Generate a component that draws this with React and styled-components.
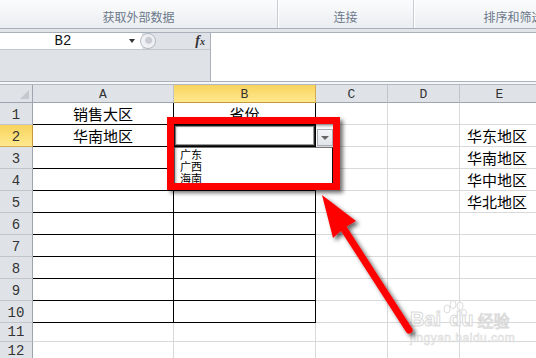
import React from 'react';
import styled, { createGlobalStyle } from 'styled-components';

const GlobalStyle = createGlobalStyle`
  html, body {
    margin: 0;
    padding: 0;
    background: #e3e6ea;
    overflow: hidden;
  }
`;

const COLS = ['A', 'B', 'C', 'D', 'E'];

const cells = {
  '1A': { text: '销售大区', align: 'center' },
  '1B': { text: '省份', align: 'center' },
  '2A': { text: '华南地区', align: 'center' },
  '2E': { text: '华东地区' },
  '3E': { text: '华南地区' },
  '4E': { text: '华中地区' },
  '5E': { text: '华北地区' },
};

const App = () => {
  const rows = Array.from({ length: 12 }, (_, i) => i + 1);

  return (
    <Page>
      <GlobalStyle />
      <Ribbon>
        <RibbonGroup $w={278}>获取外部数据</RibbonGroup>
        <RibbonGroup $w={136}>连接</RibbonGroup>
        <RibbonGroup $w={200}>排序和筛选</RibbonGroup>
      </Ribbon>
      <RibbonGap />
      <FormulaRow>
        <NamePanel>
          <NameRow>
            <NameField>
              <NameText>B2</NameText>
              <Caret />
            </NameField>
            <Controls>
              <CircleBtn />
              <Fx>
                f<small>x</small>
              </Fx>
            </Controls>
          </NameRow>
        </NamePanel>
        <FormulaInput />
      </FormulaRow>
      <Spacer />
      <Grid>
        <Corner />
        {COLS.map((c) => (
          <ColHead key={c} $active={c === 'B'}>
            {c}
          </ColHead>
        ))}
        {rows.map((r) => (
          <React.Fragment key={r}>
            <RowHead $active={r === 2}>{r}</RowHead>
            {COLS.map((c) => {
              const cell = cells[`${r}${c}`];
              return (
                <Cell
                  key={c}
                  $dark={r <= 10 && (c === 'A' || c === 'B')}
                  $align={cell && cell.align}
                  $selected={r === 2 && c === 'B'}
                >
                  {cell ? cell.text : ''}
                </Cell>
              );
            })}
          </React.Fragment>
        ))}

        <ListBox>
          <ListItem>广东</ListItem>
          <ListItem>广西</ListItem>
          <ListItem>海南</ListItem>
        </ListBox>
        <DropButton>
          <DropTri />
        </DropButton>
        <RedBox />
      </Grid>

      <Watermark>
        <MarkTop>
          <MarkWord>Bai</MarkWord>
          <svg width="26" height="30" viewBox="0 0 26 30">
            <g fill="rgba(255,255,255,0.6)" stroke="#dcdcdc" strokeWidth="1">
              <ellipse cx="6" cy="9" rx="3" ry="4" />
              <ellipse cx="12" cy="4.5" rx="3" ry="4" />
              <ellipse cx="19" cy="6" rx="3" ry="4" />
              <ellipse cx="23" cy="13" rx="2.5" ry="3.5" />
            </g>
          </svg>
          <MarkWord $offset>du</MarkWord>
          <MarkCn>经验</MarkCn>
        </MarkTop>
        <MarkUrl>jingyan.baidu.com</MarkUrl>
      </Watermark>

      <ArrowLayer width="536" height="358" viewBox="0 0 536 358">
        <defs>
          <filter id="arrowShadow" x="-20%" y="-20%" width="150%" height="150%">
            <feDropShadow dx="3" dy="3" stdDeviation="2" floodColor="#000" floodOpacity="0.6" />
          </filter>
        </defs>
        <g filter="url(#arrowShadow)" fill="#ff0000">
          <line x1="409" y1="330" x2="342" y2="226" stroke="#ff0000" strokeWidth="7" strokeLinecap="round" />
          <polygon points="322,195 356,221 344,228 333,238" />
        </g>
      </ArrowLayer>
    </Page>
  );
};

const Page = styled.div`
  position: relative;
  width: 536px;
  height: 358px;
  overflow: hidden;
  display: flex;
  flex-direction: column;
  background: #e3e6ea;
  font-family: 'Noto Sans CJK SC', 'Noto Sans', sans-serif;
`;

const Ribbon = styled.div`
  flex: none;
  height: 28px;
  display: flex;
  background: linear-gradient(#fbfcfd, #eaedf1);
  border-bottom: 1px solid #a9b0ba;
  overflow: hidden;
`;

const RibbonGroup = styled.div`
  flex: none;
  width: ${(p) => p.$w}px;
  box-sizing: border-box;
  display: flex;
  align-items: flex-end;
  justify-content: center;
  padding-bottom: 3px;
  border-right: 1px solid #c8cdd4;
  box-shadow: 1px 0 0 #ffffff;
  font-size: 12px;
  line-height: 16px;
  color: #6c798a;
  white-space: nowrap;
`;

const RibbonGap = styled.div`
  flex: none;
  height: 3px;
  background: #e1e4e8;
`;

const FormulaRow = styled.div`
  flex: none;
  height: 50px;
  box-sizing: border-box;
  display: flex;
  border-top: 1px solid #a9b0ba;
  border-bottom: 1px solid #a9b0ba;
`;

const NamePanel = styled.div`
  flex: none;
  width: 211px;
  box-sizing: border-box;
  background: #dfe2e7;
  border-right: 1px solid #a9b0ba;
`;

const NameRow = styled.div`
  height: 16px;
  display: flex;
  border-bottom: 1px solid #c3c8cf;
`;

const NameField = styled.div`
  flex: none;
  width: 142px;
  display: flex;
  align-items: center;
  background: #ffffff;
`;

const NameText = styled.div`
  width: 126px;
  text-align: center;
  font-family: 'Liberation Mono', monospace;
  font-size: 14px;
  line-height: 16px;
  color: #111;
`;

const Caret = styled.div`
  width: 0;
  height: 0;
  margin-left: 3px;
  border-left: 3px solid transparent;
  border-right: 3px solid transparent;
  border-top: 4px solid #333;
`;

const Controls = styled.div`
  flex: 1;
  display: flex;
  align-items: center;
  justify-content: space-between;
  padding-right: 5px;
`;

const CircleBtn = styled.div`
  width: 14px;
  height: 14px;
  margin-left: -2px;
  border-radius: 50%;
  border: 1px solid #b4bac3;
  background: radial-gradient(circle at 55% 45%, #c9cdd3 0 3px, #eceef1 4px, #f7f8fa);
`;

const Fx = styled.div`
  font-family: 'Liberation Serif', serif;
  font-style: italic;
  font-weight: bold;
  font-size: 14px;
  line-height: 16px;
  color: #333;

  small {
    font-size: 10px;
  }
`;

const FormulaInput = styled.div`
  flex: 1;
  background: #ffffff;
`;

const Spacer = styled.div`
  flex: none;
  height: 2px;
  background: #f5f6f8;
  border-bottom: 1px solid #b2b8c0;
`;

const Grid = styled.div`
  position: relative;
  flex: none;
  display: grid;
  grid-template-columns: 33px 141px 142px 72px 72px 80px;
  grid-template-rows: 18px repeat(10, 22px) 19px 19px;
  background: #ffffff;
`;

const Corner = styled.div`
  position: relative;
  box-sizing: border-box;
  background: #dfe3e8;
  border-right: 1px solid #9ea5ae;
  border-bottom: 1px solid #9ea5ae;

  &::after {
    content: '';
    position: absolute;
    right: 3px;
    bottom: 3px;
    border-left: 9px solid transparent;
    border-bottom: 9px solid #c4c9d0;
  }
`;

const ColHead = styled.div`
  box-sizing: border-box;
  display: flex;
  align-items: center;
  justify-content: center;
  padding-top: 1px;
  background: ${(p) => (p.$active ? 'linear-gradient(#f8d35e, #ffe98e)' : '#dfe3e8')};
  border-right: 1px solid ${(p) => (p.$active ? '#d3ad52' : '#c0c5cc')};
  border-bottom: 1px solid ${(p) => (p.$active ? '#c29a3c' : '#9ea5ae')};
  font-family: 'Liberation Mono', monospace;
  font-size: 13px;
  color: #333;
`;

const RowHead = styled.div`
  box-sizing: border-box;
  display: flex;
  align-items: flex-end;
  justify-content: center;
  background: ${(p) => (p.$active ? 'linear-gradient(#f8d35e, #ffe98e)' : '#dfe3e8')};
  border-right: 1px solid ${(p) => (p.$active ? '#c29a3c' : '#9ea5ae')};
  border-bottom: 1px solid ${(p) => (p.$active ? '#d3ad52' : '#c0c5cc')};
  font-family: 'Liberation Mono', monospace;
  font-size: 14px;
  line-height: 18px;
  color: #333;
`;

const Cell = styled.div`
  position: relative;
  box-sizing: border-box;
  display: flex;
  align-items: flex-end;
  justify-content: ${(p) => (p.$align === 'center' ? 'center' : 'flex-start')};
  padding: 0 0 1px ${(p) => (p.$align === 'center' ? 0 : 7)}px;
  border-right: 1px solid ${(p) => (p.$dark ? '#000' : '#d9d9d9')};
  border-bottom: 1px solid ${(p) => (p.$dark ? '#000' : '#d9d9d9')};
  box-shadow: ${(p) => (p.$selected ? 'inset 0 0 0 1px #222, inset 0 0 0 2px #9a9a9a' : 'none')};
  font-size: 15px;
  line-height: 18px;
  color: #000;
  white-space: nowrap;
  overflow: visible;
`;

const ListBox = styled.div`
  position: absolute;
  left: 174px;
  top: 62px;
  width: 159px;
  height: 38px;
  box-sizing: border-box;
  padding: 0 0 0 5px;
  background: #ffffff;
  border: 1px solid #777;
  border-right-color: #111;
  border-bottom-color: #111;
`;

const ListItem = styled.div`
  font-size: 11px;
  line-height: 12px;
  color: #000;
`;

const DropButton = styled.div`
  position: absolute;
  left: 317px;
  top: 44px;
  width: 16px;
  height: 17px;
  box-sizing: border-box;
  display: flex;
  align-items: center;
  justify-content: center;
  background: linear-gradient(#f4f5f7, #e2e5e9);
  border: 1px solid #a8aeb6;
`;

const DropTri = styled.div`
  width: 0;
  height: 0;
  border-left: 4px solid transparent;
  border-right: 4px solid transparent;
  border-top: 4px solid #666;
`;

const RedBox = styled.div`
  position: absolute;
  left: 167px;
  top: 32px;
  width: 173px;
  height: 73px;
  box-sizing: border-box;
  border: 7px solid #ff0000;
  box-shadow: 3px 3px 4px rgba(0, 0, 0, 0.55), inset 2px 2px 3px rgba(0, 0, 0, 0.35);
`;

const ArrowLayer = styled.svg`
  position: absolute;
  left: 0;
  top: 0;
  pointer-events: none;
  z-index: 5;
`;

const Watermark = styled.div`
  position: absolute;
  left: 410px;
  top: 300px;
  display: flex;
  flex-direction: column;
  pointer-events: none;
  z-index: 4;
`;

const MarkTop = styled.div`
  display: flex;
  align-items: flex-end;
  height: 30px;
`;

const MarkWord = styled.span`
  font-family: 'Liberation Sans', sans-serif;
  font-weight: bold;
  font-size: 20px;
  line-height: 22px;
  color: rgba(255, 255, 255, 0.6);
  -webkit-text-stroke: 1px #dadada;
  margin-left: ${(p) => (p.$offset ? '-18px' : '0')};
`;

const MarkCn = styled.span`
  margin-left: 4px;
  font-size: 16px;
  line-height: 20px;
  color: rgba(255, 255, 255, 0.6);
  -webkit-text-stroke: 1px #dadada;
`;

const MarkUrl = styled.div`
  margin-top: 2px;
  font-family: 'Liberation Sans', sans-serif;
  font-size: 12px;
  line-height: 12px;
  color: rgba(255, 255, 255, 0.6);
  -webkit-text-stroke: 0.6px #dadada;
  letter-spacing: 0.5px;
`;

export default App;
